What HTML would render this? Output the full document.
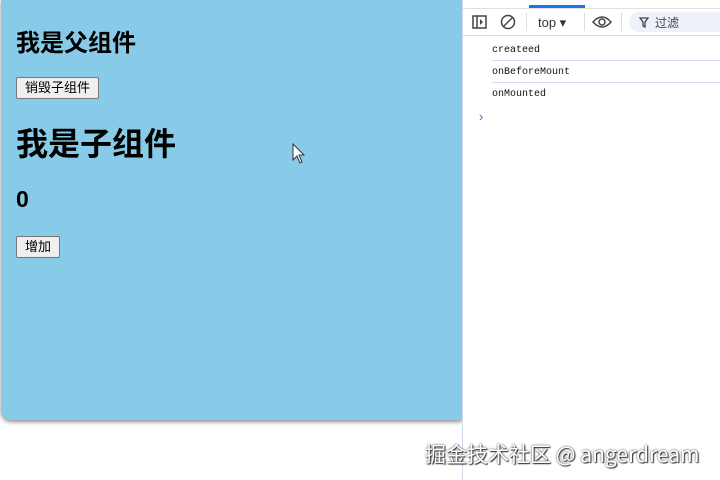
<!DOCTYPE html>
<html><head><meta charset="utf-8"><style>
body{margin:0;width:720px;height:480px;background:#fff;position:relative;overflow:hidden;font-family:"Liberation Sans","Noto Sans CJK SC",sans-serif}
.app{position:absolute;left:1px;top:0;width:461px;height:420px;background:#87cbe8;border-radius:0 0 0 10px;box-shadow:0 2px 4px rgba(0,0,0,.45)}
h1,h2{margin:0;position:absolute;left:15px;color:#000;font-weight:bold}
button{position:absolute;left:15px;font-family:"Liberation Sans","Noto Sans CJK SC",sans-serif;font-size:13px;background:#efefef;border:1px solid #767676;border-radius:2px;padding:0 8px;height:22px;line-height:20px;color:#000}
.dev{position:absolute;left:462px;top:0;width:258px;height:480px;background:#fff;border-left:1px solid #d0d8e8}
.tabs{height:8px;border-bottom:1px solid #e0e0e0;position:relative}
.tabs .act{position:absolute;left:66px;width:56px;top:5px;height:3px;background:#1a73e8}
.bar{height:26px;border-bottom:1px solid #dde;position:relative;font-size:12px;color:#333}
.row{font-family:"Liberation Mono",monospace;font-size:10px;color:#111;position:absolute;left:29px}
.line{position:absolute;left:29px;right:0;height:1px;background:#d6dcef}
.wm{position:absolute;left:425px;top:439px;font-size:21px;color:#fff;text-shadow:0 0 2px #333,1px 1px 1px #333;font-family:"Noto Sans CJK SC",sans-serif}
</style></head><body>
<div class="app">
<h2 style="top:23px;font-size:24px">我是父组件</h2>
<button style="top:77px">销毁子组件</button>
<h1 style="top:119px;font-size:32px">我是子组件</h1>
<h2 style="top:186px;font-size:23px">0</h2>
<button style="top:236px">增加</button>
</div>
<svg style="position:absolute;left:292px;top:143px" width="14" height="22" viewBox="0 0 14 22"><path d="M1 1 L1 17 L5 13 L8 20 L10 19 L7 12 L12 12 Z" fill="#fff" stroke="#333" stroke-width="1"/></svg>
<div class="dev">
<div class="tabs"><div class="act"></div></div>
<div class="bar">
<svg style="position:absolute;left:9px;top:6px" width="15" height="14"><rect x="1" y="1" width="13" height="12" fill="none" stroke="#444" stroke-width="1.5"/><line x1="5" y1="1" x2="5" y2="13" stroke="#444" stroke-width="1.5"/><path d="M8 4 L11 7 L8 10Z" fill="#444"/></svg>
<svg style="position:absolute;left:37px;top:5px" width="16" height="16"><circle cx="8" cy="8" r="6.5" fill="none" stroke="#444" stroke-width="1.5"/><line x1="3.5" y1="12.5" x2="12.5" y2="3.5" stroke="#444" stroke-width="1.5"/></svg>
<div style="position:absolute;left:63px;top:4px;width:1px;height:18px;background:#ddd"></div>
<span style="position:absolute;left:75px;top:6px;font-size:13px">top ▾</span>
<div style="position:absolute;left:121px;top:4px;width:1px;height:18px;background:#ddd"></div>
<svg style="position:absolute;left:129px;top:6px" width="20" height="14"><path d="M1 7 Q10 -3 19 7 Q10 17 1 7Z" fill="none" stroke="#444" stroke-width="1.5"/><circle cx="10" cy="7" r="3" fill="none" stroke="#444" stroke-width="1.5"/></svg>
<div style="position:absolute;left:158px;top:4px;width:1px;height:18px;background:#ddd"></div>
<div style="position:absolute;left:166px;top:3px;width:100px;height:20px;background:#eef1f8;border-radius:10px"></div>
<svg style="position:absolute;left:176px;top:8px" width="10" height="11"><path d="M1 1 H9 L6 5 V10 L4 9 V5 Z" fill="none" stroke="#444" stroke-width="1.3"/></svg>
<span style="position:absolute;left:192px;top:5px;font-size:12px;color:#444">过滤</span>
</div>
<div class="row" style="top:45px">createed</div>
<div class="line" style="top:60px"></div>
<div class="row" style="top:67px">onBeforeMount</div>
<div class="line" style="top:82px"></div>
<div class="row" style="top:89px">onMounted</div>
<span style="position:absolute;left:16px;top:109px;color:#1a73e8;font-size:13px">›</span>
</div>
<div class="wm">掘金技术社区 @ angerdream</div>
</body></html>
